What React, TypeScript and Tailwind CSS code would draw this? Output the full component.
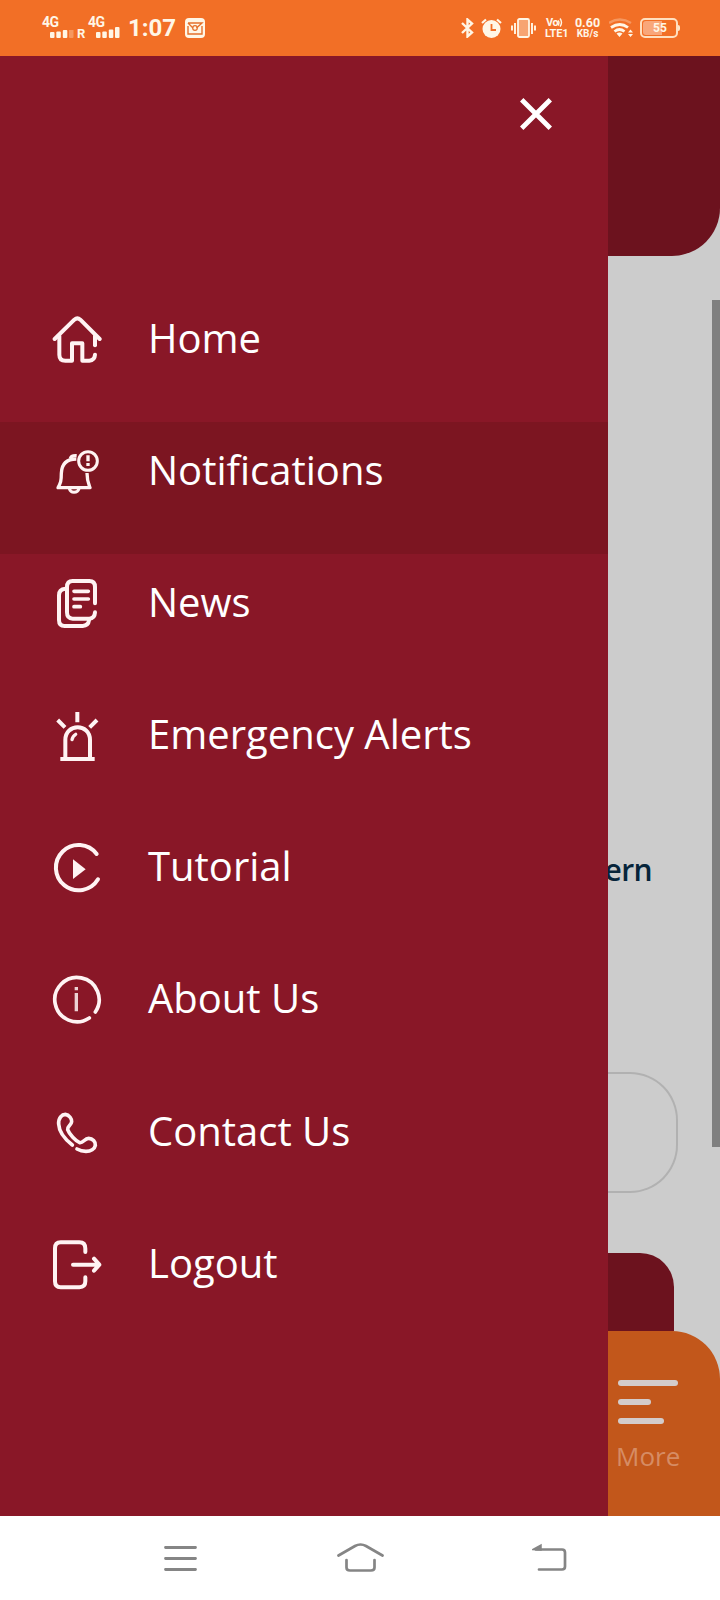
import type { ReactNode } from "react"

type MenuItem = {
    label: string
    viewBox: string
    icon: ReactNode
}

const MENU: MenuItem[] = [
    {
        label: "Home",
        viewBox: "60 60 156 168",
        icon: (
            <>
                <path d="M74 147 L133 89 Q142 81 151 89 L209 147" />
                <path d="M88 138 V194 Q88 212 106 212 H126 V160 H157 V212 H178 Q194 211 195 194" />
                <path d="M195 138 V166" />
            </>
        ),
    },
    {
        label: "Notifications",
        viewBox: "60 456 156 168",
        icon: (
            <>
                <path strokeWidth="10" strokeLinecap="butt" d="M139 507 C108 507 95 522 94 550 C94 574 92 578 84 593 H180 C175 580 171 572 171 549" />
                <path strokeWidth="10" strokeLinecap="butt" d="M121 506 Q123 496 140 497" />
                <path strokeWidth="9" strokeLinecap="butt" d="M118 596 Q121 607 132 607 Q144 607 147 596" />
                <circle strokeWidth="9" cx="174" cy="513" r="28" />
                <path strokeWidth="10" strokeLinecap="butt" d="M174 496 V514 M174 519 V528" />
            </>
        ),
    },
    {
        label: "News",
        viewBox: "60 42 156 168",
        icon: (
            <>
                <path d="M195 130 V81 Q195 63 178 63 H128 Q111 63 111 81 V157 Q111 176 128 176 H178 Q194 175 195 157" />
                <path d="M106 86 Q87 87 87 106 V180 Q87 198 104 198 H158 Q175 197 177 181" />
                <path strokeWidth="11" d="M132 94 H175 M132 117 H175 M132 140 H151" />
            </>
        ),
    },
    {
        label: "Emergency Alerts",
        viewBox: "60 438 156 168",
        icon: (
            <>
                <path strokeLinecap="butt" d="M91 597 H194 M142 456 V487" />
                <path strokeLinecap="butt" d="M83 480 L105 502 M201 480 L179 502" />
                <path d="M106 595 V540 C106 489 180 489 180 540 V595" />
                <path strokeWidth="10" d="M126 539 Q128 528 137 523" />
            </>
        ),
    },
    {
        label: "Tutorial",
        viewBox: "60 54 156 168",
        icon: (
            <>
                <path d="M200 102 A68 68 0 1 0 204 178" />
                <path fill="currentColor" stroke="none" d="M129 118 L167 148 L129 177 Z" />
            </>
        ),
    },
    {
        label: "About Us",
        viewBox: "60 450 156 168",
        icon: (
            <>
                <path strokeWidth="11" d="M196 576 A66.500 66.500 0 1 0 178 594" />
                <path strokeWidth="10" strokeOpacity="0.85" strokeLinecap="butt" d="M139 519 V574 M139 501 V511" />
            </>
        ),
    },
    {
        label: "Contact Us",
        viewBox: "60 37 156 168",
        icon: (
            <>
                <path strokeWidth="11" d="M127 163 C104 145 87 123 86 100 C85 81 96 71 106 71 C118 72 126 86 125 93 C124 104 111 106 113 117 C118 131 137 151 149 156 C160 158 163 143 176 143 C188 143 197 154 196 164 C194 175 182 182 168 182 C157 182 148 179 141 175" />
            </>
        ),
    },
    {
        label: "Logout",
        viewBox: "60 434 156 168",
        icon: (
            <>
                <path d="M166 485 V475 Q166 456 148 456 H92 Q75 456 75 474 V573 Q75 591 92 591 H148 Q166 590 166 573 V561" />
                <path d="M129 523 H208 M192 505 L208 523 L192 541" />
            </>
        ),
    },
]

function StatusBar() {
    return (
        <header className="flex h-14 shrink-0 bg-[#f26f26] font-['Roboto'] font-bold text-[#fff6e6]">
            {/* SIGNAL */}
            <div className="ml-[42px] w-[35px] pt-[15px]">
                <div className="text-[14px] leading-[15px] tracking-[-0.5px]">4G</div>
                <svg className="ml-[8px] h-[8px] w-[24px]" viewBox="0 0 24 8" fill="currentColor">
                    <rect x="0" y="2" width="4.500" height="6" rx="1" />
                    <rect x="6.3" y="1.4" width="4.500" height="6.6" rx="1" />
                    <rect x="12.8" y="0" width="4.500" height="8" rx="1" />
                    <rect x="19" y="-1" width="4.500" height="9" rx="1" opacity="0.3" />
                </svg>
            </div>
            <div className="w-[11px] pt-[27px] text-[13px] leading-[14px]">R</div>
            <div className="w-[34px] pt-[15px]">
                <div className="text-[14px] leading-[15px] tracking-[-0.5px]">4G</div>
                <svg className="ml-[8px] -mt-[3px] h-[11px] w-[24px]" viewBox="0 -3 24 11" fill="currentColor">
                    <rect x="0" y="2" width="4.500" height="6" rx="1" />
                    <rect x="6.3" y="1.4" width="4.500" height="6.6" rx="1" />
                    <rect x="12.8" y="-.5" width="4.500" height="8.5" rx="1" />
                    <rect x="19" y="-3" width="4.500" height="11" rx="1" />
                </svg>
            </div>
            <div className="ml-[6px] w-[57px] pt-[14px] text-[24px] leading-[29px]">1:07</div>
            <svg className="mt-[18px] h-5 w-5" viewBox="0 0 20 20" fill="none">
                <rect width="20" height="20" rx="4" fill="currentColor" />
                <path d="M3 5 H17 L11.500 10 M3 5 L8 10 M3 8 V16 H17 V8" stroke="#e5702b" strokeWidth="1.4" />
                <circle cx="10" cy="10" r="2.300" stroke="#e5702b" strokeWidth="1.200" />
            </svg>

            {/* SYSTEM ICONS */}
            <svg className="mt-[18px] ml-[256px] h-5 w-[13px]" viewBox="0 0 13 20" fill="none" stroke="currentColor" strokeWidth="2.400">
                <path d="M1 5 L11 14.500 L6.500 18.500 V1.500 L11 5.500 L1 15" />
            </svg>
            <svg className="mt-[18px] ml-[7px] h-5 w-[21px]" viewBox="0 0 21 20" fill="none">
                <circle cx="10.500" cy="11" r="9" fill="currentColor" />
                <path d="M1 5 L5 1.500 M20 5 L16 1.500" stroke="currentColor" strokeWidth="2.200" />
                <path d="M10.500 6 V12 H15" stroke="#f26f26" strokeWidth="1.800" />
            </svg>
            <svg className="mt-[18px] ml-[9px] h-5 w-[25px]" viewBox="0 0 25 20" fill="none" stroke="currentColor">
                <rect x="7" y="1" width="11" height="18" rx="1.500" strokeWidth="1.800" fill="#fff6e6" fillOpacity="0.4" />
                <path d="M1 7.500 V12.500 M4 5 V16 M21 5 V16 M24 7.500 V12.500" strokeWidth="1.900" />
            </svg>
            <div className="ml-[9px] w-[26px] pt-[17px] text-[11px] leading-[11px]">
                <div className="flex h-[11px] items-center pl-px">
                    <span className="text-[11px] tracking-[-0.5px]">Vo</span>
                    <svg className="h-[9px] w-[5px]" viewBox="0 0 5 8" fill="none" stroke="currentColor">
                        <path d="M0 2 Q2 4 0 7 M2 0 Q5 4 2 8" strokeWidth="1.400" />
                    </svg>
                </div>
                <div className="tracking-[-0.2px]">LTE1</div>
            </div>
            <div className="ml-[3px] w-[27px] pt-[17px] text-center leading-[11px]">
                <div className="text-[12.500px]">0.60</div>
                <div className="text-[10px]">KB/s</div>
            </div>
            <svg className="mt-[18px] ml-[8px] h-5 w-[24px]" viewBox="0 0 24 20" fill="none" stroke="currentColor">
                <path d="M0 5 Q11 -2 22 5" strokeWidth="2.500" opacity="0.3" />
                <path d="M2 9.500 Q11 3.500 19 9.500 M5.500 13.500 Q10.500 9.500 15.500 13.500" strokeWidth="2.800" />
                <path d="M7.500 15.500 Q10.500 13.500 13.500 15.500 L10.500 19 Z M19 14.500 L21.500 11.500 L24 14.500 Z M19 16 L21.500 19 L24 16 Z" fill="currentColor" stroke="none" />
            </svg>
            <div className="mt-[18px] ml-[7px] flex h-5 w-[38px] rounded-[5px] border-2 border-[#ffe0c0] p-px">
                <div className="flex h-full w-[19px] items-center justify-center rounded-l-[3px] bg-[#f9a77a]">
                    <span className="ml-[15px] text-[12px]">55</span>
                </div>
            </div>
            <div className="mt-[25px] h-[6px] w-[2px] rounded-r bg-[#ffe6c8]" />
        </header>
    )
}

function Drawer() {
    return (
        <aside className="flex w-[608px] shrink-0 flex-col bg-[#891727]">
            <div className="flex h-[234px] justify-end pt-[42px] pr-[56px]">
                <svg className="h-[32px] w-[32px] text-white" viewBox="0 0 32 32" fill="none" stroke="currentColor" strokeWidth="4.800">
                    <path d="M1.700 1.700 L30.300 30.300 M30.300 1.700 L1.700 30.300" />
                </svg>
            </div>
            <nav>
                {MENU.map(item => (
                    <a
                        key={item.label}
                        className={`flex h-[132.1px] items-start pt-5 pl-[50px] text-[#fff3f3] ${item.label === "Notifications" ? "bg-[#7c1521]" : ""}`}
                    >
                        <svg
                            className="h-14 w-[52px]"
                            viewBox={item.viewBox}
                            fill="none"
                            stroke="currentColor"
                            strokeWidth="12"
                            strokeLinecap="round"
                            strokeLinejoin="round"
                        >
                            {item.icon}
                        </svg>
                        <span className="ml-[46px] text-[40px] leading-[56px] text-white">{item.label}</span>
                    </a>
                ))}
            </nav>
        </aside>
    )
}

function DimmedPage() {
    return (
        <main className="relative flex min-w-0 flex-1 flex-col overflow-hidden bg-[#cccccc]">
            <div className="h-[200px] shrink-0 rounded-br-[48px] bg-[#6c121e]" />
            <div className="mt-[592px] flex h-[44px] justify-end pr-[68px] text-[30px] leading-[44px] font-semibold tracking-[-0.6px] text-[#06243a]">
                ern
            </div>
            <div className="mt-[180px] mr-[42px] h-[121px] rounded-r-[48px] border-2 border-l-0 border-[#b1b1b1]" />
            <div className="mt-[60px] mr-[46px] h-[78px] rounded-tr-[34px] bg-[#6c121e]" />
            <div className="flex-1 rounded-tr-[48px] bg-[#c2571b] pt-[49px] pl-[10px]">
                <div className="flex flex-col gap-[13px]">
                    <div className="h-[6px] w-[60px] rounded-full bg-[#d3cccb]" />
                    <div className="h-[6px] w-[33px] rounded-full bg-[#d3cccb]" />
                    <div className="h-[6px] w-[46px] rounded-full bg-[#d3cccb]" />
                </div>
                <div className="-ml-[2px] mt-[14px] text-[26px] leading-9 text-[#d68c64]">More</div>
            </div>
            {/* scrollbar thumb */}
            <div className="absolute top-[244px] right-0 h-[847px] w-2 bg-[#7f7f7f]" />
        </main>
    )
}

function SystemNav() {
    return (
        <footer className="flex h-[84px] shrink-0 items-start bg-white pt-[24px] text-[#858585]">
            <svg className="ml-[164px] h-[36px] w-[33px]" viewBox="0 0 33 36" fill="none" stroke="currentColor" strokeWidth="2.800" strokeLinecap="round">
                <path d="M1.500 7.500 H31.500 M1.500 18.500 H31.500 M1.500 29.500 H31.500" />
            </svg>
            <svg className="ml-[140px] h-[36px] w-[47px]" viewBox="0 0 47 36" fill="none" stroke="currentColor" strokeWidth="2.700" strokeLinecap="round">
                <path d="M1.500 15.500 L18 6 Q23.500 3 29 6 L45.500 15.500" />
                <path d="M9.500 20 V27.500 Q9.500 30.500 13 30.500 H34 Q37.500 30.500 37.500 27.500 V20" />
            </svg>
            <svg className="ml-[148px] h-[36px] w-[35px]" viewBox="0 0 35 36" fill="none" stroke="currentColor" strokeWidth="2.700" strokeLinecap="round">
                <path d="M4 9.500 H30 Q33 9.500 33 12.500 V26.500 Q33 29.500 30 29.500 H7" />
                <path d="M1 9.500 L9 5 V10 Z" fill="currentColor" strokeWidth="1.500" />
            </svg>
        </footer>
    )
}

export default function App() {
    return (
        <div className="flex h-[1600px] w-[720px] flex-col overflow-hidden font-['Open_Sans',sans-serif]">
            <StatusBar />
            <div className="flex min-h-0 flex-1">
                <Drawer />
                <DimmedPage />
            </div>
            <SystemNav />
        </div>
    )
}
